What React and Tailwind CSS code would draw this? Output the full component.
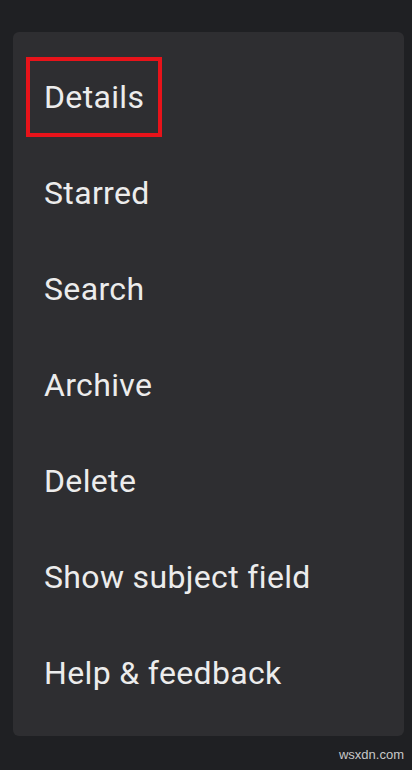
import React from 'react';

const items = ['Details', 'Starred', 'Search', 'Archive', 'Delete', 'Show subject field', 'Help & feedback'];

export default function App() {
  return (
    <div className="w-[412px] h-[770px] bg-[#1f2023] pt-[32px] px-[13px] font-['Roboto',sans-serif] overflow-hidden relative">
      <div className="w-[391px] bg-[#2e2e31] rounded-[6px] pt-[17px] pb-[15px]">
        {items.map((label, i) => (
          <div key={label} className="h-[96px] flex items-center pl-[31px]">
            <span className="relative text-[32px] leading-none text-[#ececec] tracking-[0.35px]">
              {label}
              {i === 0 && (
                <span className="absolute -left-[18px] -right-[18px] -top-[24px] -bottom-[24px] border-4 border-[#e8131a]" />
              )}
            </span>
          </div>
        ))}
      </div>
      <div className="absolute right-[8px] bottom-[6px] text-[13px] text-[#c8c8c8] font-['Liberation_Sans',sans-serif]">wsxdn.com</div>
    </div>
  );
}
